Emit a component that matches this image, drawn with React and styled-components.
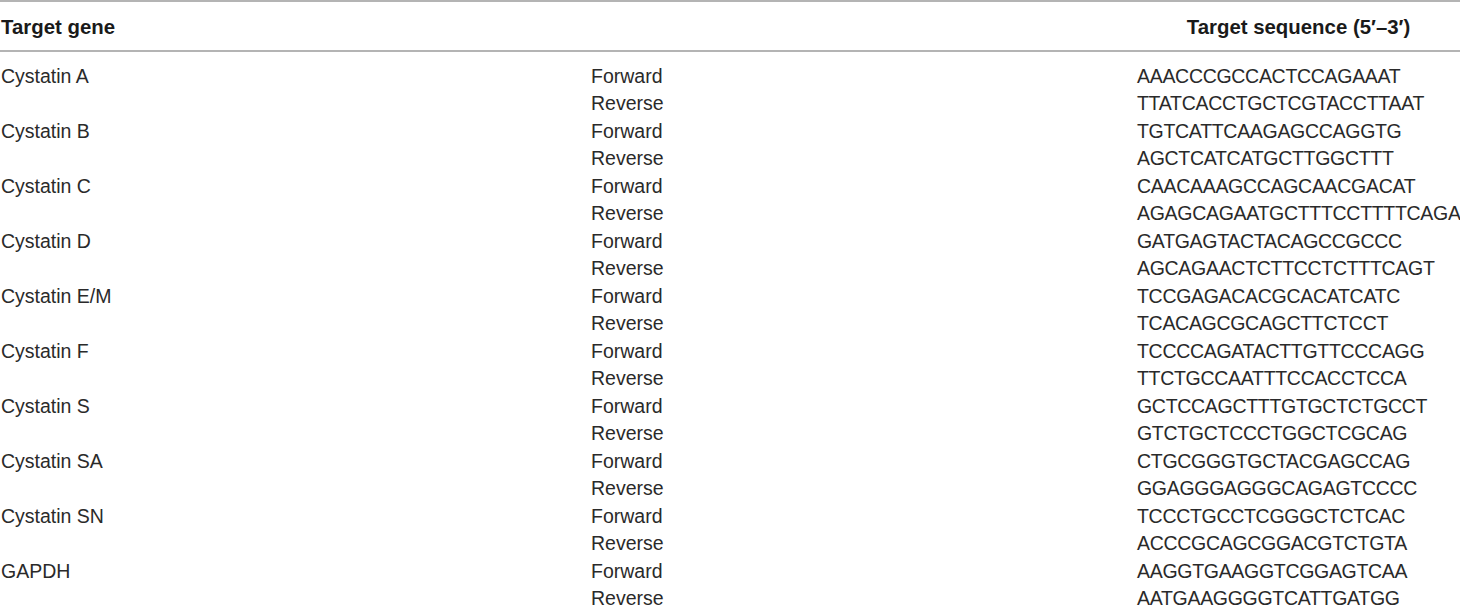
import React from "react";
import styled, { createGlobalStyle } from "styled-components";

const GlobalStyle = createGlobalStyle`
  body {
    margin: 0;
    background: #ffffff;
    font-family: "Liberation Sans", Arial, sans-serif;
  }
`;

const Table = styled.div`
  width: 1460px;
  border-top: 2px solid #b4b4b4;
  color: #2a2a2a;
  font-size: 19.5px;
`;

const HeadRow = styled.div`
  display: grid;
  grid-template-columns: 591px 546px 1fr;
  height: 50px;
  box-sizing: border-box;
  padding-top: 3px;
  align-items: center;
  border-bottom: 2px solid #b4b4b4;
  font-weight: bold;
  font-size: 20.4px;
  color: #1a1a1a;
`;

const HeadCell = styled.div`
  text-align: ${(p) => (p.center ? "center" : "left")};
  padding-left: ${(p) => (p.center ? "0" : "1px")};
  white-space: nowrap;
`;

const Body = styled.div`
  padding-top: 10.5px;
`;

const Row = styled.div`
  display: grid;
  grid-template-columns: 591px 546px 1fr;
  height: 27.5px;
  line-height: 27.5px;
  white-space: nowrap;
`;

const Cell = styled.div`
  padding-left: ${(p) => (p.first ? "1px" : "0")};
`;

const Sequence = styled.div`
  letter-spacing: -0.3px;
`;

const data = [
  ["Cystatin A", "AAACCCGCCACTCCAGAAAT", "TTATCACCTGCTCGTACCTTAAT"],
  ["Cystatin B", "TGTCATTCAAGAGCCAGGTG", "AGCTCATCATGCTTGGCTTT"],
  ["Cystatin C", "CAACAAAGCCAGCAACGACAT", "AGAGCAGAATGCTTTCCTTTTCAGA"],
  ["Cystatin D", "GATGAGTACTACAGCCGCCC", "AGCAGAACTCTTCCTCTTTCAGT"],
  ["Cystatin E/M", "TCCGAGACACGCACATCATC", "TCACAGCGCAGCTTCTCCT"],
  ["Cystatin F", "TCCCCAGATACTTGTTCCCAGG", "TTCTGCCAATTTCCACCTCCA"],
  ["Cystatin S", "GCTCCAGCTTTGTGCTCTGCCT", "GTCTGCTCCCTGGCTCGCAG"],
  ["Cystatin SA", "CTGCGGGTGCTACGAGCCAG", "GGAGGGAGGGCAGAGTCCCC"],
  ["Cystatin SN", "TCCCTGCCTCGGGCTCTCAC", "ACCCGCAGCGGACGTCTGTA"],
  ["GAPDH", "AAGGTGAAGGTCGGAGTCAA", "AATGAAGGGGTCATTGATGG"],
];

export default function App() {
  return (
    <>
      <GlobalStyle />
      <Table>
        <HeadRow>
          <HeadCell>Target gene</HeadCell>
          <HeadCell />
          <HeadCell center>Target sequence (5′–3′)</HeadCell>
        </HeadRow>
        <Body>
          {data.map(([gene, fwd, rev]) => (
            <React.Fragment key={gene}>
              <Row>
                <Cell first>{gene}</Cell>
                <Cell>Forward</Cell>
                <Sequence>{fwd}</Sequence>
              </Row>
              <Row>
                <Cell first />
                <Cell>Reverse</Cell>
                <Sequence>{rev}</Sequence>
              </Row>
            </React.Fragment>
          ))}
        </Body>
      </Table>
    </>
  );
}
